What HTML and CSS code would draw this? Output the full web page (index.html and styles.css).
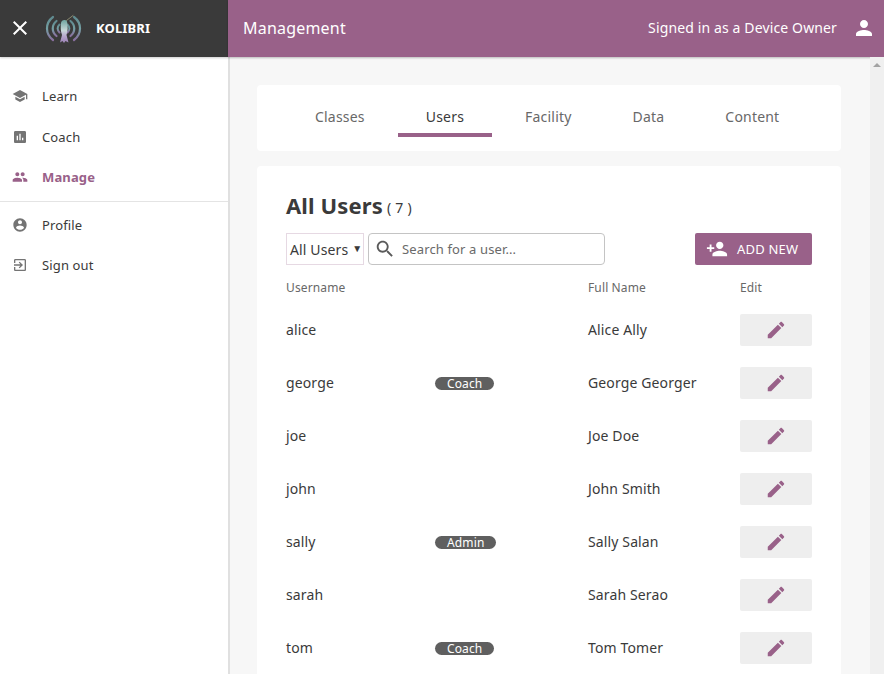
FILE: index.html
```html
<!DOCTYPE html>
<html lang="en">
<head>
    <meta charset="UTF-8">
    <title>Users - Kolibri</title>
    <link rel="stylesheet" href="styles.css">
</head>
<body>
    <aside class="sidebar">
        <div class="side-head">
            <svg class="close-icon" viewBox="0 0 24 24"><path d="M19 6.41 17.59 5 12 10.59 6.41 5 5 6.41 10.59 12 5 17.59 6.41 19 12 13.41 17.59 19 19 17.59 13.41 12z"/></svg>
            <svg class="logo" viewBox="0 0 38 30" fill="none" stroke-linecap="round">
                <defs>
                    <linearGradient id="wave" x1="0" y1="0" x2="0" y2="1">
                        <stop offset="0" stop-color="#5f8a8f"/>
                        <stop offset="0.5" stop-color="#74a0a3"/>
                        <stop offset="1" stop-color="#8a6fa0"/>
                    </linearGradient>
                    <linearGradient id="bird" x1="0" y1="0" x2="0" y2="1">
                        <stop offset="0" stop-color="#6fa5a0"/>
                        <stop offset="0.45" stop-color="#c8d8d8"/>
                        <stop offset="0.7" stop-color="#b7a8cc"/>
                        <stop offset="1" stop-color="#9a80b5"/>
                    </linearGradient>
                </defs>
                <g stroke="url(#wave)">
                    <path d="M8 3C0 9 0 20 8 26" stroke-width="2.2"/>
                    <path d="M11.500 7C6.500 11 6.500 18 11.500 22" stroke-width="2.200"/>
                    <path d="M14.500 10.500C12 13 12 16 14.500 18.500" stroke-width="2"/>
                    <path d="M29 3C37 9 37 20 29 26" stroke-width="2.200"/>
                    <path d="M25.500 7C30.500 11 30.500 18 25.500 22" stroke-width="2.200"/>
                    <path d="M22.500 10.500C25 13 25 16 22.500 18.500" stroke-width="2"/>
                </g>
                <path d="M21.500 6.500 28 1.500" stroke="#9a9a7a" stroke-width="0.8"/>
                <path d="M16 9C16.500 6 20 5 22 7.500C23 12 23 17 21.500 21L23.500 28.500 20.500 27 19 29 17.500 27 15 28.500 17 21C15.500 17 15.500 13 16 9Z" fill="url(#bird)"/>
            </svg>
            <span class="brand">KOLIBRI</span>
        </div>
        <nav class="side-nav">
            <a class="nav-item">
                <svg viewBox="0 0 24 24"><path d="M5 13.18v4L12 21l7-3.820v-4L12 17l-7-3.820zM12 3 1 9l11 6 9-4.910V17h2V9L12 3z"/></svg>
                Learn
            </a>
            <a class="nav-item">
                <svg viewBox="0 0 24 24"><path d="M19 3H5c-1.100 0-2 .9-2 2v14c0 1.100.9 2 2 2h14c1.100 0 2-.9 2-2V5c0-1.100-.9-2-2-2zM9 17H7v-7h2v7zm4 0h-2V7h2v10zm4 0h-2v-4h2v4z"/></svg>
                Coach
            </a>
            <a class="nav-item active">
                <svg viewBox="0 0 24 24"><path d="M16 11c1.660 0 2.990-1.340 2.990-3S17.660 5 16 5s-3 1.340-3 3 1.340 3 3 3zm-8 0c1.660 0 2.990-1.340 2.990-3S9.660 5 8 5 5 6.340 5 8s1.340 3 3 3zm0 2c-2.330 0-7 1.170-7 3.500V19h14v-2.500C15 14.170 10.330 13 8 13zm8 0c-.29 0-.62.02-.97.05 1.160.84 1.970 1.970 1.970 3.450V19h6v-2.500c0-2.330-4.670-3.500-7-3.500z"/></svg>
                Manage
            </a>
            <div class="nav-divider"></div>
            <a class="nav-item">
                <svg viewBox="0 0 24 24"><path d="M12 2C6.480 2 2 6.480 2 12s4.480 10 10 10 10-4.480 10-10S17.520 2 12 2zm0 3c1.660 0 3 1.340 3 3s-1.340 3-3 3-3-1.340-3-3 1.340-3 3-3zm0 14.200c-2.500 0-4.710-1.280-6-3.220.03-1.990 4-3.080 6-3.080 1.990 0 5.970 1.090 6 3.080-1.290 1.940-3.500 3.220-6 3.220z"/></svg>
                Profile
            </a>
            <a class="nav-item">
                <svg viewBox="0 0 24 24"><path d="M10.090 15.590 11.500 17l5-5-5-5-1.410 1.410L12.670 11H3v2h9.670l-2.580 2.590zM19 3H5c-1.110 0-2 .9-2 2v4h2V5h14v14H5v-4H3v4c0 1.100.89 2 2 2h14c1.100 0 2-.9 2-2V5c0-1.100-.9-2-2-2z"/></svg>
                Sign out
            </a>
        </nav>
    </aside>

    <div class="page">
        <header class="topbar">
            <span class="page-title">Management</span>
            <span class="signed-in">Signed in as a Device Owner</span>
            <svg class="user-icon" viewBox="0 0 24 24"><path d="M12 12c2.210 0 4-1.790 4-4s-1.790-4-4-4-4 1.790-4 4 1.790 4 4 4zm0 2c-2.670 0-8 1.340-8 4v2h16v-2c0-2.660-5.330-4-8-4z"/></svg>
        </header>
        <div class="content-wrap">
            <main class="content">
                <div class="card tabs">
                    <a class="tab">Classes</a>
                    <a class="tab selected">Users</a>
                    <a class="tab">Facility</a>
                    <a class="tab">Data</a>
                    <a class="tab">Content</a>
                </div>
                <section class="card users">
                    <h1>All Users<span class="count">( 7 )</span></h1>
                    <div class="toolbar">
                        <div class="role-select">All Users <span class="caret">▼</span></div>
                        <div class="search">
                            <svg viewBox="0 0 24 24"><path d="M15.500 14h-.79l-.28-.27C15.410 12.590 16 11.110 16 9.500 16 5.910 13.090 3 9.500 3S3 5.910 3 9.500 5.910 16 9.500 16c1.610 0 3.090-.59 4.230-1.570l.27.28v.79l5 4.990L20.490 19l-4.990-5zm-6 0C7.010 14 5 11.990 5 9.500S7.010 5 9.500 5 14 7.010 14 9.500 11.990 14 9.500 14z"/></svg>
                            <span>Search for a user...</span>
                        </div>
                        <button class="add-btn">
                            <svg viewBox="0 0 24 24"><path d="M15 12c2.210 0 4-1.790 4-4s-1.790-4-4-4-4 1.790-4 4 1.790 4 4 4zm-9-2V7H4v3H1v2h3v3h2v-3h3v-2H6zm9 4c-2.670 0-8 1.340-8 4v2h16v-2c0-2.660-5.330-4-8-4z"/></svg>
                            ADD NEW
                        </button>
                    </div>
                    <div class="user-table">
                        <div class="head">Username</div><div class="head"></div><div class="head">Full Name</div><div class="head">Edit</div>

                        <div>alice</div><div></div><div>Alice Ally</div>
                        <button class="edit-btn"><svg viewBox="0 0 24 24"><path d="M3 17.250V21h3.750L17.810 9.940l-3.750-3.750L3 17.250zM20.710 7.040c.39-.39.39-1.020 0-1.410l-2.340-2.340c-.39-.39-1.020-.39-1.410 0l-1.830 1.830 3.750 3.750 1.830-1.830z"/></svg></button>

                        <div>george</div><div><span class="badge">Coach</span></div><div>George Georger</div>
                        <button class="edit-btn"><svg viewBox="0 0 24 24"><path d="M3 17.250V21h3.750L17.810 9.940l-3.750-3.750L3 17.250zM20.710 7.040c.39-.39.39-1.020 0-1.410l-2.340-2.340c-.39-.39-1.020-.39-1.410 0l-1.830 1.830 3.750 3.750 1.830-1.830z"/></svg></button>

                        <div>joe</div><div></div><div>Joe Doe</div>
                        <button class="edit-btn"><svg viewBox="0 0 24 24"><path d="M3 17.250V21h3.750L17.810 9.940l-3.750-3.750L3 17.250zM20.710 7.040c.39-.39.39-1.020 0-1.410l-2.340-2.340c-.39-.39-1.020-.39-1.410 0l-1.830 1.830 3.750 3.750 1.830-1.830z"/></svg></button>

                        <div>john</div><div></div><div>John Smith</div>
                        <button class="edit-btn"><svg viewBox="0 0 24 24"><path d="M3 17.250V21h3.750L17.810 9.940l-3.750-3.750L3 17.250zM20.710 7.040c.39-.39.39-1.020 0-1.410l-2.340-2.340c-.39-.39-1.020-.39-1.410 0l-1.830 1.830 3.750 3.750 1.830-1.830z"/></svg></button>

                        <div>sally</div><div><span class="badge">Admin</span></div><div>Sally Salan</div>
                        <button class="edit-btn"><svg viewBox="0 0 24 24"><path d="M3 17.250V21h3.750L17.810 9.940l-3.750-3.750L3 17.250zM20.710 7.040c.39-.39.39-1.020 0-1.410l-2.340-2.340c-.39-.39-1.020-.39-1.410 0l-1.830 1.830 3.750 3.750 1.830-1.830z"/></svg></button>

                        <div>sarah</div><div></div><div>Sarah Serao</div>
                        <button class="edit-btn"><svg viewBox="0 0 24 24"><path d="M3 17.250V21h3.750L17.810 9.940l-3.750-3.750L3 17.250zM20.710 7.040c.39-.39.39-1.020 0-1.410l-2.340-2.340c-.39-.39-1.020-.39-1.410 0l-1.830 1.830 3.750 3.750 1.830-1.830z"/></svg></button>

                        <div>tom</div><div><span class="badge">Coach</span></div><div>Tom Tomer</div>
                        <button class="edit-btn"><svg viewBox="0 0 24 24"><path d="M3 17.250V21h3.750L17.810 9.940l-3.750-3.750L3 17.250zM20.710 7.040c.39-.39.39-1.020 0-1.410l-2.340-2.340c-.39-.39-1.020-.39-1.410 0l-1.830 1.830 3.750 3.750 1.830-1.830z"/></svg></button>
                    </div>
                </section>
            </main>
            <div class="scrollbar"><span class="arrow-up"></span></div>
        </div>
    </div>
</body>
</html>
```

FILE: styles.css
```css
* {
    box-sizing: border-box;
}
html, body {
    height: 100%;
    overflow: hidden;
}
body {
    margin: 0;
    display: flex;
    font-family: "Noto Sans", sans-serif;
    font-size: 14px;
    letter-spacing: 0.13px;
    color: #3a3a3a;
    background-color: #f7f7f7;
}

/* side nav */
.sidebar {
    width: 230px;
    flex-shrink: 0;
    background-color: #fff;
    border-right: 2px solid #e0e0e0;
}
.side-head {
    height: 57px;
    display: flex;
    align-items: center;
    padding-bottom: 2px;
    background-color: #3a3a3a;
    margin-right: -2px;
    width: 228px;
    box-shadow: 0 1px 2px rgba(0, 0, 0, 0.2);
}
.close-icon {
    width: 24px;
    height: 24px;
    margin-left: 8px;
    fill: #fff;
}
.logo {
    width: 38px;
    height: 30px;
    margin: 2px 0 0 13px;
}
.brand {
    margin-left: 13px;
    color: #fff;
    font-size: 13px;
    font-weight: 700;
}
.side-nav {
    padding-top: 19px;
}
.nav-item {
    height: 40px;
    display: flex;
    align-items: center;
    padding-left: 12px;
    font-size: 13px;
    color: #3a3a3a;
}
.nav-item:first-child {
    margin-bottom: 1px;
}
.nav-item svg {
    width: 16px;
    height: 16px;
    margin-right: 14px;
    fill: #747474;
}
.nav-item.active {
    color: #996189;
    font-weight: 700;
}
.nav-item.active svg {
    fill: #996189;
}
.nav-divider {
    height: 1px;
    margin: 4px 0 3px;
    background-color: #e4e4e4;
}

/* top bar */
.page {
    flex: 1;
    min-width: 0;
    display: flex;
    flex-direction: column;
    margin-left: -2px;
}
.topbar {
    height: 57px;
    flex-shrink: 0;
    display: flex;
    align-items: center;
    padding: 0 8px 2px 15px;
    background-color: #996189;
    color: #fff;
    box-shadow: 0 1px 2px rgba(0, 0, 0, 0.25);
}
.page-title {
    font-size: 16px;
    letter-spacing: 0.2px;
    flex: 1;
}
.signed-in {
    font-size: 14px;
}
.user-icon {
    width: 24px;
    height: 24px;
    margin-left: 15px;
    fill: #fff;
}

/* main area */
.content-wrap {
    flex: 1;
    display: flex;
    min-height: 0;
    padding-left: 2px;
}
.content {
    flex: 1;
    padding: 28px 29px 0 27px;
    overflow: hidden;
}
.scrollbar {
    width: 14px;
    background-color: #f0f0f0;
    display: flex;
    justify-content: center;
    padding-top: 6px;
}
.arrow-up {
    width: 0;
    height: 0;
    border-left: 4px solid transparent;
    border-right: 4px solid transparent;
    border-bottom: 4px solid #a3a3a3;
}
.card {
    background-color: #fff;
    border-radius: 4px;
}
.tabs {
    height: 66px;
    display: flex;
    gap: 5px;
    align-items: flex-end;
    padding: 0 0 14px 30px;
    margin-bottom: 15px;
}
.tab {
    height: 40px;
    padding: 2px 28px 0;
    display: flex;
    align-items: center;
    letter-spacing: 0.2px;
    color: #686868;
    border-bottom: 4px solid transparent;
}
.tab.selected {
    color: #3a3a3a;
    border-bottom-color: #996189;
}
.users {
    padding: 23px 29px 0;
    height: 540px;
}
h1 {
    margin: 0;
    font-size: 22px;
    line-height: 32px;
    font-weight: 700;
    color: #3a3a3a;
}
.count {
    margin-left: 4px;
    font-size: 14px;
    font-weight: 400;
    letter-spacing: 0.3px;
    vertical-align: 1px;
}
.toolbar {
    display: flex;
    align-items: stretch;
    height: 32px;
    margin-top: 9px;
}
.role-select {
    width: 78px;
    display: flex;
    align-items: center;
    padding-left: 3px;
    border: 1px solid #e6d9e3;
    white-space: nowrap;
}
.caret {
    font-size: 10px;
    margin-left: 4px;
    margin-top: -3px;
}
.search {
    width: 237px;
    margin-left: 4px;
    display: flex;
    align-items: center;
    padding-left: 5px;
    border: 1px solid #c4c4c4;
    border-radius: 4px;
    color: #6a6a6a;
    font-size: 13px;
}
.search svg {
    width: 22px;
    height: 22px;
    margin-right: 6px;
    fill: #5a5a5a;
}
.add-btn {
    margin-left: auto;
    width: 117px;
    display: flex;
    align-items: center;
    padding: 0 0 0 11px;
    border: none;
    border-radius: 2px;
    background-color: #996189;
    color: #fff;
    font-family: inherit;
    font-size: 13px;
    letter-spacing: 0.2px;
}
.add-btn svg {
    width: 22px;
    height: 22px;
    margin-right: 9px;
    fill: #fff;
}
.user-table {
    display: grid;
    grid-template-columns: 149px 153px 152px 72px;
    grid-template-rows: 33px;
    grid-auto-rows: 52px;
    row-gap: 1px;
    align-items: center;
    margin-top: 5px;
}
.user-table > div {
    padding-bottom: 2px;
}
.user-table .head {
    height: 33px;
    line-height: 35px;
    padding: 0;
    font-size: 12px;
    color: #686868;
}
.badge {
    display: inline-block;
    padding: 0 12px;
    border-radius: 8px;
    height: 13px;
    line-height: 13px;
    font-size: 12px;
    color: #fff;
    background-color: #5f5f5f;
}
.edit-btn {
    width: 72px;
    height: 32px;
    display: flex;
    align-items: center;
    justify-content: center;
    padding: 0;
    border: none;
    border-radius: 2px;
    background-color: #eeeeee;
}
.edit-btn svg {
    width: 22px;
    height: 22px;
    fill: #996189;
}
```
